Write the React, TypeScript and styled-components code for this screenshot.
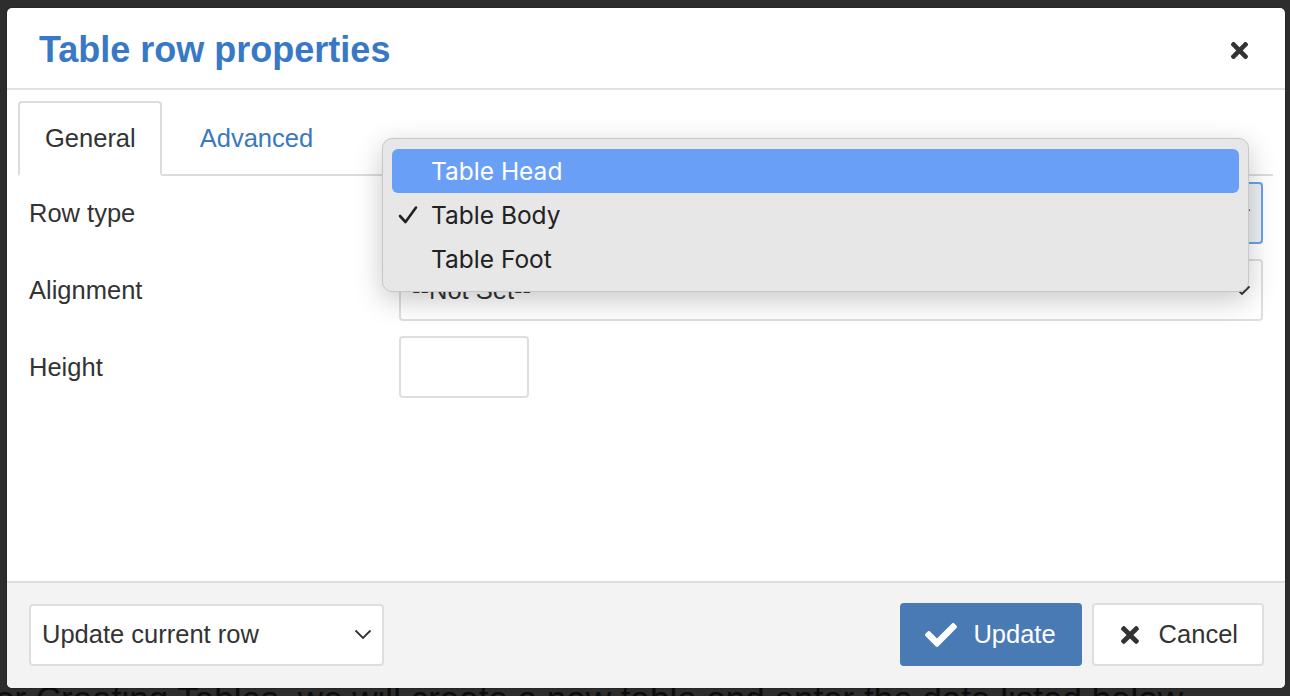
import React from "react";
import styled, { createGlobalStyle } from "styled-components";
import { FaCheck, FaTimes } from "react-icons/fa";

const GlobalStyle = createGlobalStyle`
  html, body {
    margin: 0;
    padding: 0;
    background: #2c2c2c;
    overflow: hidden;
  }
  * { box-sizing: border-box; }
`;

const Backdrop = styled.div`
  width: 1290px;
  height: 696px;
  overflow: hidden;
  background: #2d2d2d;
  padding: 8px 5px 0 7px;
  display: flex;
  flex-direction: column;
  font-family: "Liberation Sans", Arial, sans-serif;
`;

const PageText = styled.div`
  margin: -9px 0 0 -12px;
  font-size: 35px;
  color: #0c0c0c;
  white-space: nowrap;
`;

const Dialog = styled.div`
  position: relative;
  z-index: 1;
  height: 680px;
  flex: none;
  background: #fff;
  border-radius: 5px;
  display: flex;
  flex-direction: column;
  box-shadow: 0 0 0 1px rgba(0, 0, 0, 0.15);
`;

const Header = styled.div`
  height: 82px;
  border-bottom: 2px solid #e2e2e2;
  display: flex;
  align-items: center;
  justify-content: space-between;
  padding: 0 33px 0 32px;
`;

const Title = styled.h1`
  margin: 3px 0 0;
  font-size: 36px;
  font-weight: bold;
  color: #3878c4;
`;

const CloseBtn = styled.button`
  border: none;
  background: none;
  padding: 0;
  color: #333;
  display: flex;
  font-size: 25px;
  margin-top: 4px;
`;

const Body = styled.div`
  flex: 1;
  padding: 11px 12px 0 11px;
  position: relative;
`;

const TabBar = styled.div`
  display: flex;
  border-bottom: 2px solid #dcdcdc;
  height: 75px;
`;

const Tab = styled.div<{ $active?: boolean }>`
  height: 75px;
  padding: 0 24px 0 25px;
  display: flex;
  align-items: center;
  font-size: 25.5px;
  color: ${(p) => (p.$active ? "#333" : "#3a78c0")};
  background: #fff;
  border: 2px solid ${(p) => (p.$active ? "#dcdcdc" : "transparent")};
  border-bottom: ${(p) => (p.$active ? "2px solid #fff" : "none")};
  border-radius: 4px 4px 0 0;
  margin-bottom: -2px;
  ${(p) => !p.$active && "padding: 0 10px 0 36px; height: 73px;"}
`;

const Form = styled.div`
  display: flex;
  flex-direction: column;
  gap: 15px;
  padding: 6px 10px 0 11px;
`;

const Row = styled.div`
  display: grid;
  grid-template-columns: 370px 1fr;
  align-items: center;
`;

const Label = styled.label`
  font-size: 25.5px;
  color: #333;
`;

const SelectBox = styled.div<{ $focused?: boolean; $width?: string }>`
  height: 62px;
  width: ${(p) => p.$width || "100%"};
  border: 2px solid ${(p) => (p.$focused ? "#6aa2e8" : "#dedede")};
  border-radius: 4px;
  background: ${(p) => (p.$focused ? "#edf0f3" : "#fff")};
  display: flex;
  align-items: center;
  justify-content: space-between;
  padding: 0 10px 0 11px;
  font-size: 25.5px;
  color: #333;
`;

const InputBox = styled.div`
  width: 130px;
  height: 62px;
  border: 2px solid #dedede;
  border-radius: 4px;
  background: #fff;
`;

const Chevron = () => (
  <svg width="18" height="11" viewBox="0 0 18 11">
    <path d="M1.5 1.5 L9 9 L16.5 1.5" fill="none" stroke="#333" strokeWidth="1.8" />
  </svg>
);

const Menu = styled.div`
  position: absolute;
  left: 375px;
  top: 48px;
  width: 867px;
  padding: 10px 9px;
  background: #e6e7e6;
  border: 1px solid #c7c7c7;
  border-radius: 10px;
  box-shadow: 0 8px 28px rgba(0, 0, 0, 0.22);
  font-family: Inter, "Liberation Sans", sans-serif;
  z-index: 5;
`;

const MenuItem = styled.div<{ $highlight?: boolean }>`
  height: 44px;
  border-radius: 6px;
  display: flex;
  align-items: center;
  padding-left: 39px;
  position: relative;
  font-size: 24.5px;
  color: ${(p) => (p.$highlight ? "#fff" : "#222")};
  background: ${(p) => (p.$highlight ? "#6a9ff8" : "transparent")};
`;

const Tick = styled.span`
  position: absolute;
  left: 6px;
  top: 12px;
  display: flex;
`;

const Footer = styled.div`
  height: 107px;
  border-top: 2px solid #dedede;
  background: #f3f3f3;
  border-radius: 0 0 5px 5px;
  display: flex;
  align-items: center;
  justify-content: space-between;
  padding: 0 21px 2px 22px;
`;

const Buttons = styled.div`
  display: flex;
  gap: 10px;
`;

const Button = styled.button<{ $primary?: boolean }>`
  height: 63px;
  display: flex;
  align-items: center;
  gap: 16px;
  font-family: "Liberation Sans", Arial, sans-serif;
  font-size: 25.5px;
  border-radius: 4px;
  padding: 0 24px 0 23px;
  background: ${(p) => (p.$primary ? "#4a7ab4" : "#fff")};
  color: ${(p) => (p.$primary ? "#fff" : "#333")};
  border: 2px solid ${(p) => (p.$primary ? "#4a7ab4" : "#dedede")};
  svg {
    font-size: ${(p) => (p.$primary ? "32px" : "26px")};
  }
`;

export default function App() {
  return (
    <>
      <GlobalStyle />
      <Backdrop>
        <Dialog>
          <Header>
            <Title>Table row properties</Title>
            <CloseBtn>
              <FaTimes />
            </CloseBtn>
          </Header>
          <Body>
            <TabBar>
              <Tab $active>General</Tab>
              <Tab>Advanced</Tab>
            </TabBar>
            <Form>
              <Row>
                <Label>Row type</Label>
                <SelectBox $focused>
                  <span>Table Body</span>
                  <Chevron />
                </SelectBox>
              </Row>
              <Row>
                <Label>Alignment</Label>
                <SelectBox>
                  <span>--Not Set--</span>
                  <Chevron />
                </SelectBox>
              </Row>
              <Row>
                <Label>Height</Label>
                <InputBox />
              </Row>
            </Form>
            <Menu>
              <MenuItem $highlight>Table Head</MenuItem>
              <MenuItem>
                <Tick>
                  <svg width="20" height="20" viewBox="0 0 20 20">
                    <path d="M2 11 L7.5 17 L18 2.5" fill="none" stroke="#222" strokeWidth="2.6" strokeLinecap="round" strokeLinejoin="round" />
                  </svg>
                </Tick>
                Table Body
              </MenuItem>
              <MenuItem>Table Foot</MenuItem>
            </Menu>
          </Body>
          <Footer>
            <SelectBox $width="355px">
              <span>Update current row</span>
              <Chevron />
            </SelectBox>
            <Buttons>
              <Button $primary>
                <FaCheck />
                Update
              </Button>
              <Button>
                <FaTimes />
                Cancel
              </Button>
            </Buttons>
          </Footer>
        </Dialog>
        <PageText>
          or Creating Tables, we will create a new table and enter the data listed below
        </PageText>
      </Backdrop>
    </>
  );
}
